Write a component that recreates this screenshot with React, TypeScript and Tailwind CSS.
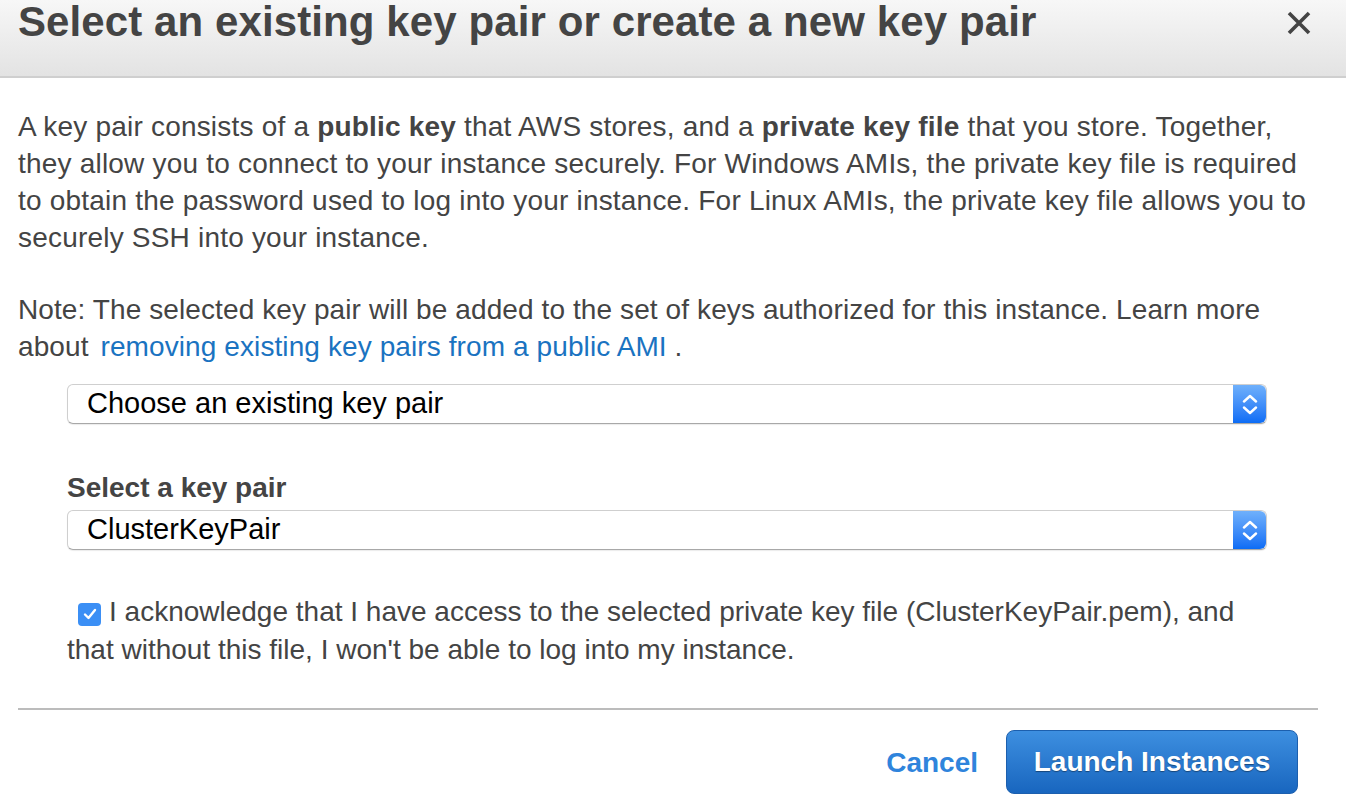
import React from "react";

const font = { fontFamily: '"Liberation Sans", Arial, sans-serif' };

const Stepper = () => (
  <div className="flex h-full w-[33px] flex-col items-center justify-center gap-[3px] rounded-r-[6px] bg-gradient-to-b from-[#6fb0fb] to-[#0a6cf5]">
    <svg width="16" height="9" viewBox="0 0 16 9" fill="none">
      <path d="M2 7.5 L8 2 L14 7.5" stroke="white" strokeWidth="2.4" strokeLinecap="round" strokeLinejoin="round" />
    </svg>
    <svg width="16" height="9" viewBox="0 0 16 9" fill="none">
      <path d="M2 1.5 L8 7 L14 1.5" stroke="white" strokeWidth="2.4" strokeLinecap="round" strokeLinejoin="round" />
    </svg>
  </div>
);

const Select = ({ value }: { value: string }) => (
  <div className="flex h-[40px] w-[1200px] items-stretch rounded-[6px] border border-[#cfcfcf] border-b-[#a8a8a8] bg-white shadow-[0_1px_1px_rgba(0,0,0,0.08)]">
    <div className="flex flex-1 items-center pl-[19px] text-[29px] text-black">{value}</div>
    <Stepper />
  </div>
);

export default function App() {
  return (
    <div className="h-[810px] w-[1346px] overflow-hidden bg-white text-[#444]" style={font}>
      <div className="flex h-[78px] items-start justify-between border-b-2 border-[#cfcfcf] bg-gradient-to-b from-[#f7f7f7] to-[#e3e3e3] pl-[18px] pr-[34px]">
        <h1 className="whitespace-nowrap text-[42px] font-bold leading-[44px] tracking-[0.1px] text-[#444]">
          Select an existing key pair or create a new key pair
        </h1>
        <svg className="mt-[11px]" width="26" height="24" viewBox="0 0 26 24">
          <path d="M3 2 L23 22 M23 2 L3 22" stroke="#444" strokeWidth="3.6" />
        </svg>
      </div>

      <div className="px-[18px] pt-[30px]">
        <p className="whitespace-nowrap text-[28px] leading-[37px] tracking-[0.2px]">
          A key pair consists of a <b>public key</b> that AWS stores, and a <b>private key file</b> that you store. Together,
          <br />
          they allow you to connect to your instance securely. For Windows AMIs, the private key file is required
          <br />
          to obtain the password used to log into your instance. For Linux AMIs, the private key file allows you to
          <br />
          securely SSH into your instance.
        </p>
        <p className="mt-[35px] whitespace-nowrap text-[28px] leading-[37px] tracking-[0.1px]">
          Note: The selected key pair will be added to the set of keys authorized for this instance. Learn more
          <br />
          about <a className="ml-[4px] text-[#1a73c1]">removing existing key pairs from a public AMI</a> .
        </p>

        <div className="mt-[19px] pl-[49px]">
          <Select value="Choose an existing key pair" />
          <div className="mt-[46px] text-[28px] font-bold leading-[36px]">Select a key pair</div>
          <div className="mt-[4px]">
            <Select value="ClusterKeyPair" />
          </div>
          <div className="mt-[43px] whitespace-nowrap pl-[11px] text-[28px] leading-[38px]">
            <span className="mr-[8px] inline-flex h-[23px] w-[23px] -translate-y-[1px] items-center justify-center rounded-[4px] bg-[#3b8ff5] align-baseline">
              <svg width="14" height="12" viewBox="0 0 14 12" fill="none">
                <path d="M2 6.5 L5.5 10 L12 2" stroke="white" strokeWidth="2.4" strokeLinecap="round" strokeLinejoin="round" />
              </svg>
            </span>
            I acknowledge that I have access to the selected private key file (ClusterKeyPair.pem), and
            <br />
            <span className="-ml-[11px]">that without this file, I won't be able to log into my instance.</span>
          </div>
        </div>

        <div className="mt-[39px] h-[2px] w-[1300px] bg-[#bcbcbc]" />

        <div className="mt-[20px] flex items-center justify-end gap-[28px] pr-[30px]">
          <a className="mt-[2px] text-[28px] font-bold text-[#2f84dc]">Cancel</a>
          <button className="h-[64px] w-[292px] rounded-[8px] border border-[#1c5fae] bg-gradient-to-b from-[#3d8fe0] to-[#1866bf] text-[28px] font-bold text-white [text-shadow:0_1px_1px_rgba(0,0,0,0.4)]">
            Launch Instances
          </button>
        </div>
      </div>
    </div>
  );
}
